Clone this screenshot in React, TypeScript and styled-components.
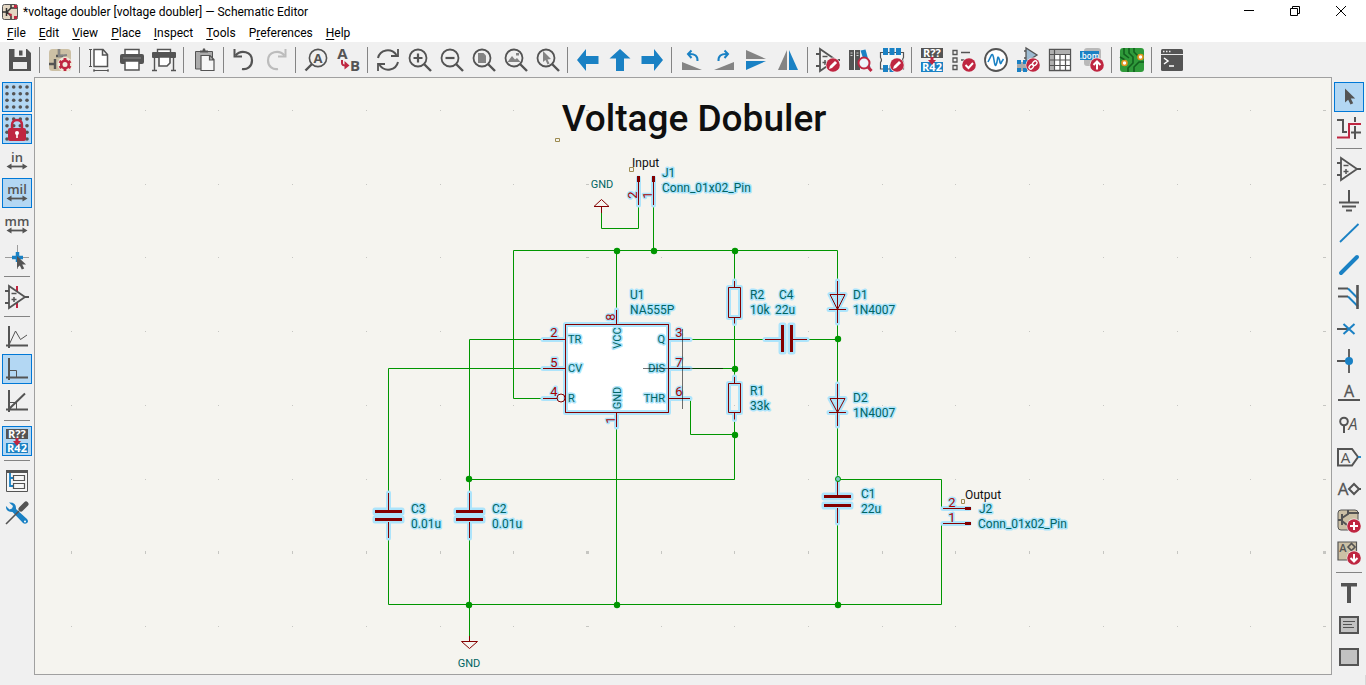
import React from "react";
import styled, { createGlobalStyle } from "styled-components";

const INK = "#545454";
const RED = "#bf2641";
const BLUE = "#1a81c4";
const GREY = "#848484";
const SAND = "#ccc0a5";
const WIRE = "#009600";
const PART = "#840000";
const PIN = "#a90000";
const FIELD = "#006464";
const GLOW = "#ade4fb";

const GlobalStyle = createGlobalStyle`
  * { box-sizing: border-box; }
  body { margin: 0; background: #f0f0f0; font-family: Roboto, "Noto Sans", sans-serif; font-size: 12px; color: #000; }
  button { font: inherit; color: inherit; background: none; border: 0; padding: 0; margin: 0; }
`;

const Window = styled.div`
  display: flex;
  flex-direction: column;
  min-height: 100vh;
`;

const TitleBar = styled.header`
  display: flex;
  align-items: center;
  height: 24px;
  padding: 0 2px;
  background: #fff;
`;

const Title = styled.h1`
  flex: 1;
  margin: 0 0 0 5px;
  font-size: 12px;
  line-height: 24px;
  font-weight: 400;
  white-space: nowrap;
`;

const AppIcon = styled.svg`
  width: 16px;
  height: 16px;
`;

const WindowButton = styled.button`
  display: flex;
  align-items: center;
  justify-content: center;
  width: 46px;
  height: 20px;
  svg { width: 12px; height: 12px; }
`;

const MenuBar = styled.nav`
  display: flex;
  gap: 13px;
  height: 18px;
  padding: 0 7px;
  background: #fff;
`;

const MenuItem = styled.button`
  line-height: 18px;
  white-space: nowrap;
  u { text-underline-offset: 2px; }
`;

const TopTools = styled.div`
  display: flex;
  align-items: center;
  height: 35px;
  padding: 1px 4px 0;
`;

const SideTools = styled.div`
  display: flex;
  flex-direction: column;
  align-items: center;
  flex: none;
  width: 34px;
  padding-top: 4px;
`;

const ToolCell = styled.button<{ $on?: boolean }>`
  display: flex;
  flex: none;
  align-items: center;
  justify-content: center;
  width: 30px;
  height: 30px;
  margin: 1px;
  border: 1px solid ${(p) => (p.$on ? "#0078d7" : "transparent")};
  background: ${(p) => (p.$on ? "#b3d7f3" : "transparent")};
`;

const Glyph = styled.svg`
  flex: none;
  width: 24px;
  height: 24px;
  overflow: visible;
  text { font-family: "Open Sans", sans-serif; }
`;

const Divider = styled.span<{ $across?: boolean }>`
  flex: none;
  width: ${(p) => (p.$across ? "26px" : "1px")};
  height: ${(p) => (p.$across ? "1px" : "26px")};
  margin: ${(p) => (p.$across ? "3px 0 4px" : "0 4px 0 3px")};
  background: ${GREY};
`;

const Workspace = styled.main`
  display: flex;
  flex: 1;
`;

const Canvas = styled.div`
  display: flex;
  flex: 1;
  min-width: 0;
  border: 1px solid #a0a0a0;
  background: #f5f4ef;
`;

const Sheet = styled.svg`
  flex: 1;
  width: 100%;
  min-height: 596px;
  overflow: hidden;
`;

const StatusBar = styled.footer`
  height: 10px;
  border-right: 1px solid #d8d8d8;
`;

const Wire = styled.path`
  fill: none;
  stroke: ${WIRE};
  stroke-width: 1px;
`;

const Glow = styled.path`
  fill: none;
  stroke: ${GLOW};
  stroke-width: 5px;
  stroke-linecap: round;
  stroke-linejoin: round;
`;

const Outline = styled.path`
  fill: none;
  stroke: ${PART};
  stroke-width: 1px;
`;

const Label = styled.text<{ $size?: number; $color?: string; $glow?: boolean; $weight?: number }>`
  font-family: Roboto, sans-serif;
  font-size: ${(p) => p.$size ?? 12}px;
  font-weight: ${(p) => p.$weight ?? 400};
  fill: ${(p) => p.$color ?? FIELD};
  stroke: ${(p) => (p.$glow ? GLOW : "none")};
  stroke-width: 3px;
  stroke-linejoin: round;
  paint-order: stroke;
`;

const line = (w = 2, color = INK) => ({
  fill: "none",
  stroke: color,
  strokeWidth: w,
});

const Badge = ({ children, x = 17, y = 17 }: { children?: React.ReactNode; x?: number; y?: number }) => (
  <g transform={`translate(${x} ${y})`}>
    <circle r="7.4" fill="#f0f0f0" />
    <circle r="6.8" fill={RED} />
    {children}
  </g>
);

const Lens = ({ children }: { children?: React.ReactNode }) => (
  <>
    <circle cx="10" cy="10" r="8.500" {...line(1.800)} />
    <path d="M16 16L23 23" {...line(2.400)} />
    {children}
  </>
);

const Pencil = () => (
  <path d="M-4 4l.9-3L2-4.1 4.1-2-1 3.1z" fill="#fff" />
);

const Annotate = () => (
  <>
    <rect x="1" y="0" width="22" height="10" fill={INK} />
    <rect x="1" y="14" width="22" height="10" fill={BLUE} />
    <text x="12" y="9" fontSize="11" fontWeight="700" fill="#fff" textAnchor="middle">R??</text>
    <text x="12" y="23" fontSize="11" fontWeight="700" fill="#fff" textAnchor="middle">R42</text>
    <path d="M10.500 9h3v3H16l-4 5-4-5h2.500z" fill={RED} />
  </>
);

const OpAmp = () => (
  <>
    <path d="M4 1v22L20 12zM0 6h4M0 18h4M20 12h4" {...line(1.800)} />
    <path d="M6.500 8.500h5M6.500 14.500h5M9 12v5" {...line(1.500)} />
  </>
);

const GridDots = () => (
  <>
    {[2, 8.7, 15.3, 22].map((y) =>
      [2, 8.7, 15.3, 22].map((x) => <circle key={`${x}-${y}`} cx={x} cy={y} r="1.8" fill={INK} />)
    )}
  </>
);

const Units = ({ children }: { children: string }) => (
  <>
    <text x="12" y="13" fontSize="13" fontWeight="600" fill={INK} textAnchor="middle">{children}</text>
    <path d="M4 17.500h16" {...line(1.800)} />
    <path d="M1.500 17.500l5-3v6zM22.500 17.500l-5-3v6z" fill={INK} />
  </>
);

const Chip = () => (
  <>
    <path d="M.500 4.500h23v5q-2 2.500 0 5v6.500H.500v-6.500q2-2.500 0-5z" fill="#f6f6f6" stroke={INK} strokeWidth="1.200" />
    <path d="M3 0h5v7H3zM9.500 0h5v7h-5zM16 0h5v7h-5zM3 17h5v7H3zM9.500 17h5v7h-5z" fill={BLUE} />
  </>
);

const icons: Record<string, React.ReactNode> = {
  save: (
    <>
      <path d="M1 1h18l4 4v18H1z" fill={INK} />
      <path d="M6.500 1h11.500v8H6.500zM5 14h14v7H5z" fill="#f0f0f0" />
      <path d="M11 2.500h3.500v5H11z" fill={INK} />
    </>
  ),
  setup: (
    <>
      <rect x="1" y="1" width="22" height="22" rx="3.500" fill={SAND} />
      <path d="M11 1v7M1 16h6M7 11v10M8 8h7" {...line(2.400)} />
      <path d="M11 1v7l8-1" {...line(2, GREY)} />
      <circle cx="17" cy="16.500" r="7.500" fill="#f0e9dc" />
      <circle cx="17" cy="16.500" r="3.800" {...line(2.600, RED)} />
      <path d="M17 10v2.500M17 20.500V23M11.400 13.200l2 1.200M20.600 18.600l2 1.200M11.400 19.800l2-1.200M20.600 14.400l2-1.200" {...line(2.800, RED)} />
    </>
  ),
  page: (
    <>
      <path d="M6 1.500h9l4.500 5V18.500H6zM14.500 1.500V7h5" {...line(1.500)} fill="#fff" />
      <path d="M2.500 1v18M1 1.500h3M1 18.500h3M5.500 22.500h15M6 21v3M20 21v3" {...line(1)} />
    </>
  ),
  print: (
    <>
      <path d="M5 6V1.500h14V6" {...line(1.500)} fill="#fff" />
      <rect x="0" y="6" width="24" height="10" rx="2" fill={INK} />
      <path d="M3 10h18" stroke="#8a8a8a" strokeWidth="1" />
      <path d="M5 13h14v9H5z" {...line(1.500)} fill="#fff" />
    </>
  ),
  plot: (
    <>
      <path d="M5.500 5V1.500h13V5" {...line(1.400)} fill="#fff" />
      <rect x="0" y="4" width="24" height="6" rx="1" fill={INK} />
      <path d="M2.500 10v12M21.500 10v12M0 22.500h5M19 22.500h5" {...line(1.400)} />
      <path d="M7 9h11v6l-3 3H7z" {...line(1.600)} fill="#fff" />
    </>
  ),
  paste: (
    <>
      <path d="M3.500 3.500h17V21h-17z" {...line(1)} fill="#ababab" />
      <path d="M8 4.500v-2h2.500l.500-2h2l.500 2H16v2z" fill={INK} />
      <path d="M9 7.500h9l4 4v11H9zM17.500 7.500V12H22" {...line(1.200)} fill="#f6f6f6" />
    </>
  ),
  undo: (
    <>
      <path d="M3.500 7.500C9 1 20 3.500 20 12.500c0 6-5 9.500-10 8.500" {...line(2.200)} />
      <path d="M2.500 1v7.500H10" {...line(2)} />
    </>
  ),
  redo: (
    <>
      <path d="M20.500 7.500C15 1 4 3.500 4 12.500c0 6 5 9.500 10 8.500" {...line(2.200, "#bcbcbc")} />
      <path d="M21.500 1v7.500H14" {...line(2, "#bcbcbc")} />
    </>
  ),
  find: (
    <>
      <circle cx="14" cy="10" r="8.600" {...line(1.600)} />
      <path d="M8 16l-6.500 6.500" {...line(2.400)} />
      <text x="14" y="15" fontSize="13" fontWeight="700" fill={INK} textAnchor="middle">A</text>
    </>
  ),
  replace: (
    <>
      <text x="6.500" y="11" fontSize="15" fontWeight="700" fill={INK} textAnchor="middle">A</text>
      <text x="19" y="23" fontSize="15" fontWeight="700" fill={INK} textAnchor="middle">B</text>
      <path d="M6 12v3q0 2.500 4 2.500" {...line(2, RED)} />
      <path d="M8.500 13l5 4.500-5 4z" fill={RED} />
    </>
  ),
  refresh: (
    <>
      <path d="M2 10C4 1.500 15 -.500 20.500 7M22 14c-2 8.500-13 10.500-18.500 3" {...line(2)} />
      <path d="M22 1v7h-7M2 23v-7h7" {...line(1.800)} />
    </>
  ),
  zoomIn: <Lens><path d="M5.500 10h9M10 5.500v9" {...line(2.200)} /></Lens>,
  zoomOut: <Lens><path d="M5.500 10h9" {...line(2.200)} /></Lens>,
  zoomFit: <Lens><path d="M6 5h5.500L14 7.500V15H6z" fill={GREY} /></Lens>,
  zoomObjects: <Lens><path d="M3.500 14l4.500-6 3 3.500 2-1.500 3.500 4zM12 5h3v2.500h-3z" fill={GREY} /></Lens>,
  zoomSelection: <Lens><path d="M7 3v11l2.500-2 2 4.500 2-1-2-4 3.500-.500z" fill={GREY} /></Lens>,
  back: <path d="M1 12L10 1v7h12.500v8H10v7z" fill={BLUE} />,
  up: <path d="M12 1l10.500 9.500H16V23H8V10.500H1.500z" fill={BLUE} />,
  forward: <path d="M23 12L14 1v7H1.500v8H14v7z" fill={BLUE} />,
  rotateCcw: (
    <>
      <path d="M2 14v8h20z" fill={GREY} />
      <path d="M9 6q9-.500 8.500 7" {...line(2, BLUE)} />
      <path d="M11.500 2.500L8 6l3.500 4" {...line(2, BLUE)} />
    </>
  ),
  rotateCw: (
    <>
      <path d="M22 14v8H2z" fill={GREY} />
      <path d="M15 6q-9-.500-8.500 7" {...line(2, BLUE)} />
      <path d="M12.500 2.500L16 6l-3.500 4" {...line(2, BLUE)} />
    </>
  ),
  mirrorV: (
    <>
      <path d="M2 2l20 9H2z" fill={GREY} />
      <path d="M2 13h20L2 22z" fill={BLUE} />
    </>
  ),
  mirrorH: (
    <>
      <path d="M2 22L11 2v20z" fill={GREY} />
      <path d="M13 2l9 20h-9z" fill={BLUE} />
    </>
  ),
  symbolEditor: <><OpAmp /><Badge><Pencil /></Badge></>,
  browse: (
    <>
      <path d="M1 2h5v20H1zM7 2h5v20H7z" fill={INK} />
      <path d="M2.500 5h2M2.500 7.500h2M8.500 5h2M8.500 7.500h2" {...line(1, "#cfcfcf")} />
      <path d="M12.500 2.500l5-1 5 18-4 1z" fill={BLUE} />
      <circle cx="16" cy="15" r="5.500" fill="#eef4fa" stroke={RED} strokeWidth="2" />
      <path d="M20 19l3.500 4" {...line(3, RED)} />
    </>
  ),
  footprintEditor: <><Chip /><Badge><Pencil /></Badge></>,
  annotate: <Annotate />,
  erc: (
    <>
      <path d="M1 2.500h4v4H1zM1 10h4v4H1zM1 17.500h4v4H1zM9 4.500h9M9 12h5" {...line(1.300)} />
      <Badge><path d="M-3.500 0l3 3 4.500-5" {...line(2, "#fff")} /></Badge>
    </>
  ),
  simulator: (
    <>
      <circle cx="12" cy="12" r="11" fill="#fff" stroke={INK} strokeWidth="1.800" />
      <path d="M4 14q2-4 3.500-7Q9 5 10 12t2 5q1-2 1.500-6t2 1q1 6 2 2l2-3" {...line(1.600, BLUE)} />
    </>
  ),
  assign: (
    <>
      <path d="M10 0v14l11-7zM8 3h2M8 10h2" {...line(1.300)} fill="#9dbbd2" />
      <path d="M1 14h12v9H1z" fill="#aaa" />
      <path d="M1 12h4v4H1zM7 12h4v4H7zM1 20h4v4H1zM7 20h4v4H7z" fill={BLUE} />
      <Badge>
        <g transform="rotate(-45)" {...line(1.400, "#fff")}>
          <rect x="-5" y="-1.800" width="5" height="3.600" rx="1.800" />
          <rect x="0" y="-1.800" width="5" height="3.600" rx="1.800" />
        </g>
      </Badge>
    </>
  ),
  table: (
    <>
      <path d="M1.500 1.500h21v21h-21z" {...line(1.300)} fill="#fff" />
      <path d="M2 2h20v4H2zM2 6h4v16H2z" fill="#b0b0b0" />
      <path d="M1 6.500h22M1 12h22M1 17.500h22M6.500 2v20M12 6v16M17.500 6v16" {...line(1.200)} />
    </>
  ),
  bom: (
    <>
      <rect x="4" y="0" width="17" height="18" rx="3" fill="#b9b9b9" />
      <rect x="0" y="3" width="19" height="9" fill={BLUE} />
      <text x="9.500" y="10.500" fontSize="8" fontWeight="600" fill="#fff" textAnchor="middle">.bom</text>
      <Badge><path d="M0 4.500v-8M-3.500 0L0-3.500 3.500 0" {...line(2, "#fff")} /></Badge>
    </>
  ),
  pcb: (
    <>
      <rect x="0" y="0" width="24" height="24" rx="3" fill="#2f9a3a" />
      <path d="M4 0v6l5 4M9 0v5l4 4v6l-5 5v4M14 0v4l5 5M24 14h-5l-5 5v5M0 9l5 3" {...line(1.600, "#12601e")} />
      <circle cx="4.500" cy="15" r="2.500" fill="#fff" stroke="#e0951f" strokeWidth="1.600" />
      <circle cx="20.500" cy="9" r="2.500" fill="#fff" stroke="#e0951f" strokeWidth="1.600" />
    </>
  ),
  console: (
    <>
      <rect x="1" y="1" width="22" height="22" rx="1.500" fill={INK} />
      <path d="M1 6.500h22" {...line(1, "#e8e8e8")} />
      <path d="M3 3.500h1.500M6 3.500h1.500M9 3.500h1.500" {...line(1.500, "#e8e8e8")} />
      <path d="M4 10l4 3-4 3M9 18h5" {...line(1.500, "#fff")} />
    </>
  ),
  grid: <GridDots />,
  gridLock: (
    <>
      <GridDots />
      <path d="M7 12V8q0-5 5-5t5 5v4" {...line(2.400, RED)} />
      <rect x="3" y="11" width="18" height="13" rx="2" fill={RED} />
      <path d="M12 15v6" {...line(1.600, "#fff")} />
      <circle cx="12" cy="16" r="2" fill="#fff" />
    </>
  ),
  inches: <Units>in</Units>,
  mils: <Units>mil</Units>,
  millimetres: <Units>mm</Units>,
  cursor: (
    <>
      <path d="M0 12.500h24M12.500 0v24" {...line(1, "#9c9c9c")} />
      <path d="M7 12.500h11M12.500 7v10" {...line(3.500, BLUE)} />
      <path d="M12 11v12l2.800-2.400 2 4 2.400-1.200-2-3.800H21z" fill={INK} />
    </>
  ),
  hiddenPins: (
    <>
      <path d="M12 1v22" {...line(2, RED)} />
      <path d="M4 1.500v21L20 12z" fill="#f0f0f0" />
      <OpAmp />
    </>
  ),
  freeAngle: (
    <>
      <path d="M4 1v22M1 20.500h22" {...line(2)} />
      <path d="M4 20l6.500-14 5 8.500L22 10" {...line(1)} />
    </>
  ),
  rightAngle: (
    <>
      <path d="M4 1v22M1 20.500h22" {...line(2)} />
      <path d="M4 13.500h7.500v7" {...line(1)} />
    </>
  ),
  halfAngle: (
    <>
      <path d="M4 1v22M1 20.500h22M4 20L20 4.500" {...line(2)} />
      <path d="M4 13.500h7.500v7" {...line(1)} />
    </>
  ),
  hierarchy: (
    <>
      <path d="M1.500 1.500h21v21h-21z" {...line(1)} fill="#f6f6f6" />
      <path d="M1 1h22v3H1z" fill={INK} />
      <path d="M5 4v13h4M5 9h4" {...line(1.800, BLUE)} />
      <path d="M8.500 6.500h11v5h-11zM8.500 14.500h11v5h-11z" {...line(1.200)} fill="#f6f6f6" />
    </>
  ),
  tools: (
    <>
      <path d="M4 1.500l4 3.500-1 2.500-2.500 1L1 5Q.500 11 7.500 11L18 22q2 1.500 4 0t0-4L11 8q.500-7-7-6.500z" fill={BLUE} />
      <circle cx="20" cy="20.500" r="1" fill="#fff" />
      <path d="M14 10L1 23" {...line(1.600)} />
      <path d="M16 8l5-5" {...line(5)} strokeLinecap="round" />
    </>
  ),
  select: <path d="M8 3.500v14l3.200-2.800 2.300 4.800 2.700-1.300-2.400-4.700h4.400z" fill={INK} />,
  highlight: (
    <>
      <path d="M0 3h6v12h4M18 0v22M13 15.500h11" {...line(2)} />
      <path d="M0 20.500h12V7h12" {...line(4, "#f0f0f0")} />
      <path d="M0 20.500h12V7h12" {...line(2, RED)} />
    </>
  ),
  symbol: <OpAmp />,
  power: <path d="M12 1v12M2 13.500h20M5 17.500h14M9 21.500h6" {...line(2)} />,
  wire: <path d="M3 21L21.500 3" {...line(1.800, BLUE)} />,
  bus: <path d="M4 20L20 4" {...line(4, BLUE)} strokeLinecap="round" />,
  busEntry: (
    <>
      <path d="M1 3.500h10M1 11.500h10" {...line(2)} />
      <path d="M11 3.500l10 10M11 11.500l10 10" {...line(2, BLUE)} />
      <path d="M20.500 0v24" {...line(2.600)} />
    </>
  ),
  noConnect: (
    <>
      <path d="M0 12h12" {...line(2)} />
      <path d="M6.500 7l11 10M17.500 7l-11 10" {...line(2, BLUE)} />
    </>
  ),
  junction: (
    <>
      <path d="M12 0v24M0 12h12" {...line(1.800)} />
      <circle cx="12" cy="12" r="4" fill={BLUE} />
    </>
  ),
  netLabel: (
    <>
      <text x="12" y="16" fontSize="16" fill={INK} stroke={INK} strokeWidth=".300" textAnchor="middle">A</text>
      <path d="M1 19h22" {...line(2)} />
    </>
  ),
  directive: (
    <>
      <circle cx="7" cy="8.500" r="3.800" {...line(2)} />
      <path d="M7 12v8" {...line(2)} />
      <text x="16" y="17" fontSize="16" fontStyle="italic" fill={INK} textAnchor="middle">A</text>
    </>
  ),
  globalLabel: (
    <>
      <path d="M1 4h14l6 8-6 8.500H1z" {...line(2)} />
      <text x="8.500" y="17.500" fontSize="15" fill={INK} textAnchor="middle">A</text>
      <path d="M21 12h3" {...line(1.800, BLUE)} />
    </>
  ),
  hierLabel: (
    <>
      <text x="6" y="18" fontSize="17" fill={INK} stroke={INK} strokeWidth=".300" textAnchor="middle">A</text>
      <path d="M12 12l5-5 5 5-5 5zM21 12h3" {...line(2)} />
    </>
  ),
  sheet: (
    <>
      <rect x="1" y="1" width="20" height="20" rx="3" fill={SAND} stroke={INK} strokeWidth="1" />
      <path d="M1 11h4M5 5v11M5 9l6-4V1M5 12l5 4M11 4h11" {...line(2)} />
      <Badge><path d="M0-4v8M-4 0h8" {...line(2, "#fff")} /></Badge>
    </>
  ),
  sheetPin: (
    <>
      <path d="M1 1h18.500v18H1z" fill={SAND} stroke={INK} strokeWidth="1.200" />
      <text x="6" y="10.500" fontSize="11" fontWeight="600" fill={INK} textAnchor="middle">A</text>
      <path d="M11 6l3.500-3.500L18 6l-3.500 3.500z" {...line(1.600)} />
      <Badge><path d="M0-4v7.500M-3.500 0L0 3.500 3.500 0" {...line(2, "#fff")} /></Badge>
    </>
  ),
  text: <path d="M4 2h16v3.500h-6V22h-4V5.500H4z" fill={INK} />,
  textBox: (
    <>
      <path d="M3 4h18v16H3z" {...line(2)} fill="#c2c2c2" />
      <path d="M6 8.500h12M6 11.500h9M6 14.500h11" {...line(1.200)} />
    </>
  ),
  rectangle: <path d="M3 4h18v16H3z" {...line(2)} fill="#c2c2c2" />,
};

type Tool = { icon: string; label: string; on?: boolean };
const t = (icon: string, label: string, on = false): Tool => ({ icon, label, on });

const topTools: Tool[][] = [
  [t("save", "Save")],
  [t("setup", "Schematic Setup")],
  [t("page", "Page Settings"), t("print", "Print"), t("plot", "Plot")],
  [t("paste", "Paste")],
  [t("undo", "Undo"), t("redo", "Redo")],
  [t("find", "Find"), t("replace", "Find and Replace")],
  [
    t("refresh", "Refresh"), t("zoomIn", "Zoom In"), t("zoomOut", "Zoom Out"), t("zoomFit", "Zoom to Fit"),
    t("zoomObjects", "Zoom to Objects"), t("zoomSelection", "Zoom to Selection"),
  ],
  [t("back", "Navigate Back"), t("up", "Navigate Up"), t("forward", "Navigate Forward")],
  [
    t("rotateCcw", "Rotate Counterclockwise"), t("rotateCw", "Rotate Clockwise"),
    t("mirrorV", "Mirror Vertically"), t("mirrorH", "Mirror Horizontally"),
  ],
  [t("symbolEditor", "Symbol Editor"), t("browse", "Symbol Library Browser"), t("footprintEditor", "Footprint Editor")],
  [
    t("annotate", "Annotate Schematic"), t("erc", "Electrical Rules Checker"), t("simulator", "Simulator"),
    t("assign", "Assign Footprints"), t("table", "Edit Symbol Fields"), t("bom", "Generate BOM"),
  ],
  [t("pcb", "Open PCB Editor")],
  [t("console", "Scripting Console")],
];

const leftTools: Tool[][] = [
  [
    t("grid", "Show Grid", true), t("gridLock", "Grid Overrides", true), t("inches", "Inches"),
    t("mils", "Mils", true), t("millimetres", "Millimeters"), t("cursor", "Full-Window Crosshairs"),
  ],
  [t("hiddenPins", "Show Hidden Pins")],
  [t("freeAngle", "Free Angle"), t("rightAngle", "Right Angle", true), t("halfAngle", "45 Degree")],
  [t("annotate", "Annotate Automatically", true)],
  [t("hierarchy", "Hierarchy Navigator"), t("tools", "Properties")],
];

const rightTools: Tool[][] = [
  [t("select", "Select", true), t("highlight", "Highlight Nets")],
  [
    t("symbol", "Add Symbol"), t("power", "Add Power"), t("wire", "Add Wire"), t("bus", "Add Bus"),
    t("busEntry", "Add Bus Entry"), t("noConnect", "Add No Connect"), t("junction", "Add Junction"),
    t("netLabel", "Add Label"), t("directive", "Add Net Class Directive"), t("globalLabel", "Add Global Label"),
    t("hierLabel", "Add Hierarchical Label"), t("sheet", "Add Sheet"), t("sheetPin", "Import Sheet Pin"),
  ],
  [t("text", "Add Text"), t("textBox", "Add Text Box"), t("rectangle", "Add Rectangle")],
];

const ToolGroups = ({ groups, across }: { groups: Tool[][]; across?: boolean }) => (
  <>
    {groups.map((group, i) => (
      <React.Fragment key={i}>
        {i > 0 && <Divider $across={across} />}
        {group.map((tool) => (
          <ToolCell key={tool.icon} $on={tool.on} aria-label={tool.label}>
            <Glyph viewBox="0 0 24 24" aria-hidden="true">{icons[tool.icon]}</Glyph>
          </ToolCell>
        ))}
      </React.Fragment>
    ))}
  </>
);

const menus: [string, string, string][] = [
  ["", "F", "ile"], ["", "E", "dit"], ["", "V", "iew"], ["", "P", "lace"],
  ["", "I", "nspect"], ["", "T", "ools"], ["P", "r", "eferences"], ["", "H", "elp"],
];

const Symbol = ({ d, children }: { d: string; children?: React.ReactNode }) => (
  <>
    <Glow d={d} />
    {children}
    <Outline d={d} />
  </>
);

const HorizontalCap = ({ x, y, gap = 5 }: { x: number; y: number; gap?: number }) => {
  const plates = `M-13-5h27v3h-27zM-13 ${gap - 2}h27v3h-27z`;
  const leads = `M.5-22V-4M.5 ${gap + 2}V23`;
  return (
    <g transform={`translate(${x} ${y})`}>
      <Glow d={plates + leads} />
      <Outline d={leads} />
      <path d={plates} fill={PART} />
    </g>
  );
};

const dots = { cols: Array.from({ length: 18 }, (_, i) => i), rows: Array.from({ length: 8 }, (_, i) => i) };

const Grid = () => (
  <g fill="#c6c6c2">
    {dots.rows.map((r) =>
      dots.cols.map((c) => {
        const w = c % 10 === 7 ? 3 : 1;
        const h = r === 6 ? 3 : 1;
        return (
          <rect
            key={`${r}-${c}`}
            x={Math.round(71 + c * 73.7 - (w - 1) / 2)}
            y={Math.round(110 + r * 73.7 - (h - 1) / 2)}
            width={w}
            height={h}
          />
        );
      })
    )}
  </g>
);

const junctions = [
  [617, 251], [654, 251], [735, 251], [838, 339], [735, 369], [735, 435],
  [469, 479], [469, 605], [617, 605], [838, 605],
];

const fields: [string, number, number][] = [
  ["J1", 662, 177], ["Conn_01x02_Pin", 662, 192],
  ["U1", 630, 299], ["NA555P", 630, 314],
  ["R2", 750, 299], ["10k", 750, 314],
  ["C4", 779, 299], ["22u", 775, 314],
  ["D1", 853, 299], ["1N4007", 853, 314],
  ["D2", 853, 402], ["1N4007", 853, 417],
  ["R1", 750, 395], ["33k", 750, 410],
  ["C3", 411, 513], ["0.01u", 411, 528],
  ["C2", 492, 513], ["0.01u", 492, 528],
  ["C1", 861, 498], ["22u", 861, 513],
  ["J2", 979, 513], ["Conn_01x02_Pin", 978, 528],
];

const pinNumbers: [string, number, number][] = [
  ["2", 554, 337], ["5", 554, 367], ["4", 554, 396],
  ["3", 679, 337], ["7", 679, 367], ["6", 679, 396],
  ["2", 952, 507], ["1", 952, 522],
];

const uprightPins: [string, number, number][] = [
  ["8", 615, 317], ["1", 615, 420], ["2", 637, 195], ["1", 652, 195],
];

const chipPins =
  "M616.500 310v14M616.500 413v14M543 339.500h22M543 368.500h22M543 398.500h14M669 339.500h21M669 368.500h21M669 398.500h21";
const inputPins = "M638.500 178v27M653.500 178v27";
const outputPins = "M943 508.500h26M943 523.500h26";

const Schematic = () => (
  <Sheet role="img" aria-label="Voltage doubler schematic">
    <g transform="translate(-35 -78)">
      <Grid />
      <Wire d="M542 398.500H513.500V250.500H837.500V280M616.500 250.500V310M653.500 206V250.500M638.500 206V228.500H601.500V212" />
      <Wire d="M542 339.500H469.500V494M542 368.500H388.500V494M388.500 537V604.500H941.500V523M469.500 537V637" />
      <Wire d="M616.500 427V604.500M734.500 250.500V280M734.500 324V377M690.500 398.500V434.500H734.500M734.500 420V479.500H469.500" />
      <Wire d="M690 339.500H764M808 339.500H837.500M690 368.500H734.500M837.500 324V383M837.500 427V480M837.500 522V604.500M837.500 479.500H941.500V508" />
      {junctions.map(([x, y]) => <circle key={`${x}-${y}`} cx={x} cy={y} r="3.200" fill={WIRE} />)}

      <Outline d="M601.500 213V206.500M594 206.500h15l-7.500-7zM469.500 636v5.500M461.500 641.500h16l-8 7z" />

      <Glow d={chipPins} />
      <Symbol d="M565.500 324.500h103v88h-103z">
        <rect x="568" y="327" width="98" height="83" fill="#fff" />
      </Symbol>

      <Symbol d="M734.500 281v6.500M734.500 317.500v6M728.500 287.500h12v30h-12z" />
      <Symbol d="M734.500 377v6.500M734.500 412.500v7M728.500 383.500h12v29h-12z" />
      <Symbol d="M837.500 281v42M829 309.500h17M830 294.500h15l-7.500 15z" />
      <Symbol d="M837.500 384v42M829 412.500h17M830 398.500h15l-7.500 14z" />

      <HorizontalCap x={388} y={515} />
      <HorizontalCap x={469} y={515} />
      <HorizontalCap x={837} y={500} gap={6} />
      <circle cx="838" cy="479" r="2.500" fill="#7fc7c9" stroke={WIRE} />
      <Glow d="M765 339.500h16M793 339.500h14M781 325h3v27h-3zM790 325h3v27h-3z" />
      <Outline d="M765 339.500h16M793 339.500h14" />
      <path d="M781 325h3v27h-3zM790 325h3v27h-3z" fill={PART} />

      <Glow d={inputPins} />
      <Glow d={outputPins} />

      {fields.map(([s, x, y]) => <Label key={`${s}-${x}-${y}`} x={x} y={y} $glow>{s}</Label>)}
      {pinNumbers.map(([s, x, y]) => (
        <Label key={`${x}-${y}`} x={x} y={y} $size={13} textAnchor="middle" $color={PIN} $glow>{s}</Label>
      ))}
      {uprightPins.map(([s, x, y]) => (
        <Label
          key={`${x}-${y}`}
          transform={`translate(${x} ${y}) rotate(-90)`}
          $size={13}
          textAnchor="middle"
          $color={PIN}
          $glow
        >
          {s}
        </Label>
      ))}
      <Outline d={chipPins} />
      <Outline d={inputPins} />
      <Outline d={outputPins} />
      <Outline d="M565.500 324.500h103v88h-103z" />
      <circle cx="561" cy="398" r="4" fill="none" stroke={PART} />
      <path d="M637 176h3v6h-3zM652 176h3v6h-3zM965 507h6v3h-6zM965 522h6v3h-6z" fill={PART} />

      <Label x="568" y="343" $size={11} $glow>TR</Label>
      <Label x="568" y="372" $size={11} $glow>CV</Label>
      <Label x="568" y="402" $size={11} $glow>R</Label>
      <Label x="665" y="343" $size={11} textAnchor="end" $glow>Q</Label>
      <Label x="665" y="372" $size={11} textAnchor="end" $glow>DIS</Label>
      <Label x="665" y="402" $size={11} textAnchor="end" $glow>THR</Label>
      <Label transform="translate(621 338) rotate(-90)" $size={11} textAnchor="middle" $glow>VCC</Label>
      <Label transform="translate(621 398) rotate(-90)" $size={11} textAnchor="middle" $glow>GND</Label>

      <Label x="602" y="188" $size={11} textAnchor="middle">GND</Label>
      <Label x="469" y="667" $size={11} textAnchor="middle">GND</Label>
      <Label x="632" y="167" $color="#0f0f0f">Input</Label>
      <Label x="965" y="499" $color="#0f0f0f">Output</Label>
      <Label x="694" y="131" $size={37} $weight={500} $color="#0f0f0f" textAnchor="middle">Voltage Dobuler</Label>
      <path d="M555.500 138.500h4v3h-4zM629.500 167.500h4v4h-4zM961.500 499.500h3v4h-3z" fill="none" stroke="#9c8a50" />

      <path d="M643 368.500H723M682.500 329V409" stroke="#000" strokeOpacity="0.55" fill="none" />
    </g>
  </Sheet>
);

export default function App() {
  return (
    <Window>
      <GlobalStyle />
      <TitleBar>
        <AppIcon viewBox="0 0 16 16" aria-hidden="true">
          <rect x=".5" y=".5" width="15" height="15" rx="2" fill="#e3d6c3" stroke={INK} />
          <path d="M0 8h4M4.500 4v8M5 8l4-4V1M5 8l4 4v3M9 4h6" fill="none" stroke="#333" strokeWidth="1.500" />
          <path d="M12 1h3v3h-3zM12 12h3v3h-3zM6 9l4 1-1 3z" fill={RED} />
        </AppIcon>
        <Title>*voltage doubler [voltage doubler] — Schematic Editor</Title>
        <WindowButton aria-label="Minimize">
          <svg viewBox="0 0 12 12"><path d="M1 4.500h10" stroke="#000" /></svg>
        </WindowButton>
        <WindowButton aria-label="Restore">
          <svg viewBox="0 0 12 12"><path d="M1.500 2.500h7v7h-7zM3.500 2.500v-2h7v7h-2" fill="none" stroke="#000" /></svg>
        </WindowButton>
        <WindowButton aria-label="Close">
          <svg viewBox="0 0 12 12"><path d="M1 0l10 10M11 0L1 10" stroke="#000" /></svg>
        </WindowButton>
      </TitleBar>
      <MenuBar>
        {menus.map(([pre, key, post]) => (
          <MenuItem key={post}>{pre}<u>{key}</u>{post}</MenuItem>
        ))}
      </MenuBar>
      <TopTools role="toolbar">
        <ToolGroups groups={topTools} />
      </TopTools>
      <Workspace>
        <SideTools role="toolbar">
          <ToolGroups groups={leftTools} across />
        </SideTools>
        <Canvas>
          <Schematic />
        </Canvas>
        <SideTools role="toolbar">
          <ToolGroups groups={rightTools} across />
        </SideTools>
      </Workspace>
      <StatusBar />
    </Window>
  );
}
